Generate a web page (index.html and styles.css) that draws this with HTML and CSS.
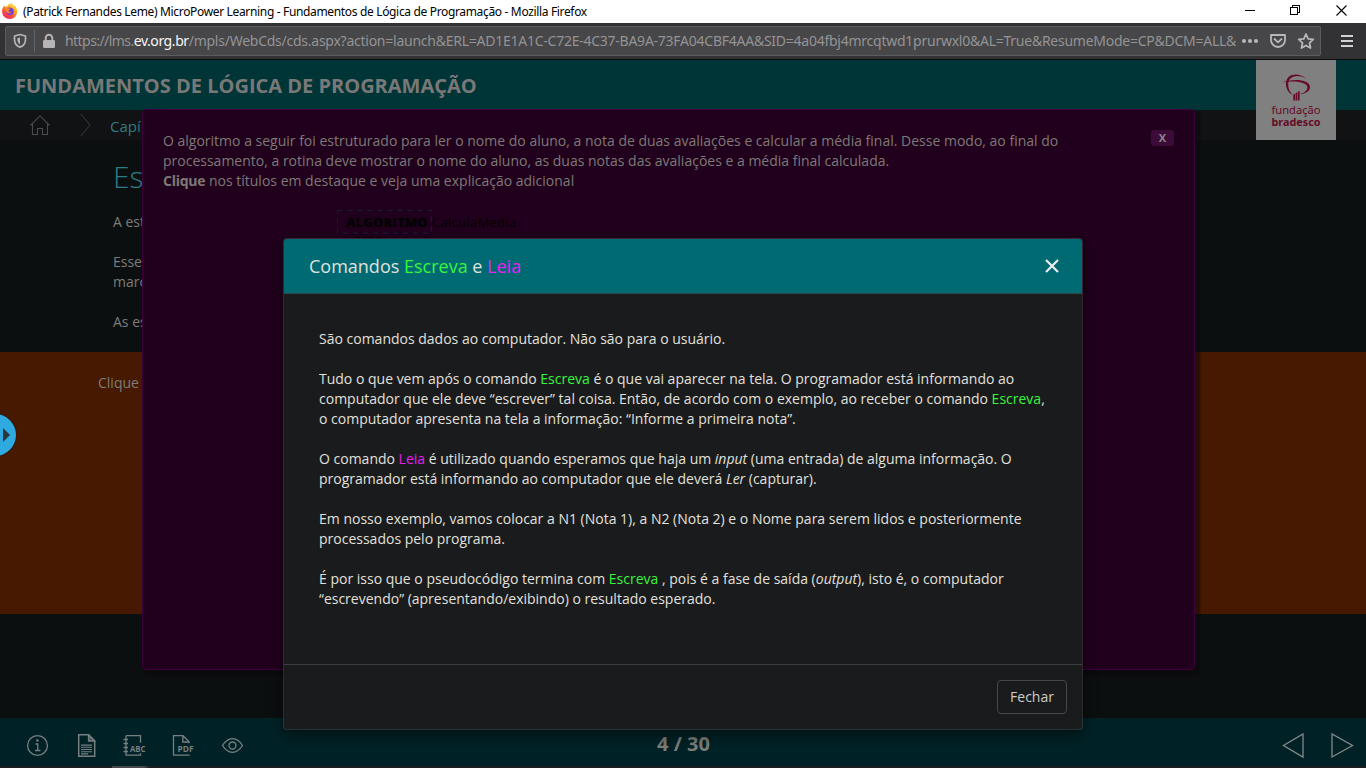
FILE: index.html
```html
<!DOCTYPE html>
<html lang="pt-BR">
<head>
<meta charset="utf-8">
<title>Fundamentos de Lógica de Programação</title>
<link rel="stylesheet" href="styles.css">
</head>
<body>
<div class="window">
  <header class="titlebar">
    <svg class="firefox" width="18" height="18" viewBox="0 0 18 18">
      <defs>
        <linearGradient id="fox" x1="0.85" y1="0" x2="0.2" y2="1"><stop offset="0" stop-color="#fff04a"/><stop offset="0.4" stop-color="#ffa51f"/><stop offset="0.7" stop-color="#ff4a3c"/><stop offset="1" stop-color="#e8206c"/></linearGradient>
      </defs>
      <path d="M1.2 7.2 3 3.4l1.4 1.5L6.5 4l2-3 .6 2L10 .8c1.3.8 2 1.900 2.300 3l1-.6c1.900 1.600 3 3.800 3 6a7.600 7.600 0 0 1-15.200.5z" fill="url(#fox)"/>
      <path d="M5 8.600c0-2 1.600-3.200 3.600-3.200 2.600 0 4.300 1.600 4.300 4s-1.700 3.900-4 3.900S5 11.400 5 8.600z" fill="#7b3fd6"/>
      <path d="M3.600 5.700c1.500-.5 3 0 3.700.9h2.200c0 .9-1.500 1.400-2 2 0 1.300 1.500 1.900 3 1.300-.8 1.700-4 1.900-5.200-.3-.7-1.200-1-2.500-1.700-3.900z" fill="#ff8a1e"/>
    </svg>
    <span class="title">(Patrick Fernandes Leme) MicroPower Learning - Fundamentos de Lógica de Programação - Mozilla Firefox</span>
    <svg class="winctl" width="110" height="20" viewBox="0 0 110 20" fill="none" stroke="#000" shape-rendering="crispEdges">
      <path d="M3 10.500h10"/>
      <path d="M48.500 7.500h7v7h-7zM50.500 7V5.500h7v7H56"/>
      <path d="M94.500 5.500l10 10M104.500 5.500l-10 10" shape-rendering="auto" stroke-width="1.100"/>
    </svg>
  </header>
  <div class="toolbar">
    <div class="urlbar">
      <svg class="shield" width="14" height="16" viewBox="0 0 14 16" fill="none" stroke="#b5b5b7" stroke-width="1.700"><path d="M1.500 3 7 1.500 12.500 3v3.500c0 3.800-2 6.500-5.500 7.600-3.500-1.100-5.500-3.800-5.500-7.600z" stroke-linejoin="round"/><path d="M7 4.500v7C5 10.300 4.300 8.500 4.300 5.200z" fill="#b5b5b7" stroke="none"/></svg>
      <span class="sep"></span>
      <svg class="lock" width="14" height="16" viewBox="0 0 14 16"><path d="M3.700 8V5a3.300 3.300 0 0 1 6.600 0v3" fill="none" stroke="#b5b5b7" stroke-width="1.900"/><rect x="1" y="7" width="12" height="8" rx="1.300" fill="#b5b5b7"/></svg>
      <span class="url"><span class="scheme">https://lms.</span><b>ev.org.br</b>/mpls/WebCds/cds.aspx?action=launch&amp;ERL=AD1E1A1C-C72E-4C37-BA9A-73FA04CBF4AA&amp;SID=4a04fbj4mrcqtwd1prurwxl0&amp;AL=True&amp;ResumeMode=CP&amp;DCM=ALL&amp;</span>
      <svg class="urlicons" width="78" height="20" viewBox="0 0 78 20" fill="none" stroke="#b8b8ba" stroke-width="1.800">
        <g fill="#b8b8ba" stroke="none"><circle cx="4" cy="10" r="2"/><circle cx="10" cy="10" r="2"/><circle cx="16" cy="10" r="2"/></g>
        <path d="M31 4h14v5a7 7 0 0 1-14 0z" stroke-linejoin="round"/><path d="M34.500 8 38 11.300 41.500 8" stroke-linecap="round"/>
        <path d="M66 3l2.200 4.800 5.100.6-3.800 3.500 1 5.100L66 14.500 61.500 17l1-5.100-3.800-3.500 5.100-.6z" stroke-linejoin="round"/>
      </svg>
    </div>
    <div class="menu"><i></i><i></i><i></i></div>
  </div>
  <main class="page">
    <div class="course">FUNDAMENTOS DE LÓGICA DE PROGRAMAÇÃO</div>
    <nav class="crumbs">
      <svg width="20" height="22" viewBox="0 0 20 22" fill="none" stroke="#4b4d4d" stroke-width="1.100"><path d="M.5 11.500 10 1.700l9.500 9.800M2.500 10v10.500h5v-6h5v6h5V10"/></svg>
      <svg class="chev" width="12" height="24" viewBox="0 0 12 24" fill="none" stroke="#3b3d3d"><path d="M.8 1 10 12 .8 23"/></svg>
      <span>Capí</span>
    </nav>
    <section class="lesson">
      <h1>Es</h1>
      <p>A est</p>
      <p>Esse<br>marc</p>
      <p>As es</p>
    </section>
    <section class="band">Clique</section>
    <section class="rest"></section>
    <footer class="bottombar">
      <svg width="226" height="28" viewBox="0 0 226 28" fill="none" stroke="#777f80" stroke-width="1.300">
        <circle cx="14.500" cy="13.500" r="9.900"/><path d="M12.500 12h2.300v6.500M12 18.500h5.500" /><circle cx="14.400" cy="8.500" r="1.300" fill="#777f80" stroke="none"/>
        <path d="M55.700 2.700h10l6 6v15.500h-16z" stroke-width="1.500"/><path d="M65.500 3v6h6z" fill="#4f595b"/><path d="M58 13.100h11M58 15.300h11M58 17.500h11M58 19.700h11M58 21.900h7" stroke-width="1.100"/>
        <path d="M103 3.700h14.500v7M103 3.700v19.500h14.500v-2M100.500 7.500h4.500M100.500 11.500h4.500M100.500 15.500h4.500M100.500 19.500h4.500"/>
        <path d="M166 22.500v.7h-15.500V3.700h9.500l6 6v1.500M159.800 4v6h6"/>
        <path d="M199.500 13.500c3-4.700 6.300-6.800 10-6.800s7 2.100 10 6.800c-3 4.700-6.300 6.800-10 6.800s-7-2.100-10-6.800z"/><circle cx="209.500" cy="13.500" r="3.500"/>
        <text x="107" y="19.600" class="tiny" textLength="15.500" lengthAdjust="spacingAndGlyphs">ABC</text>
        <text x="154.500" y="19.600" class="tiny" textLength="16" lengthAdjust="spacingAndGlyphs">PDF</text>
      </svg>
      <span class="count">4 / 30</span>
      <svg width="72" height="26" viewBox="0 0 72 26" fill="none" stroke="#85898a" stroke-width="1.300"><path d="M21 1v23L1.500 12.500zM50 1v23L70.500 12.500z"/></svg>
    </footer>
    <div class="scroll"><i></i></div>
  </main>

  <div class="logo">
    <svg width="80" height="80" viewBox="0 0 80 80" fill="#650b26">
      <path d="M49.500 18C43 12.500 29.500 13 30 24.500c.2 5.500 3.500 9 6.700 10.500-2.600-2.700-4.500-6-4.500-10.500C32.200 15.500 42 14 49.500 18z"/>
      <path d="M26 22.500c8-3.500 28-4.500 28 4.800 0 4-4.500 6.400-10 7 4.500-1.800 7.400-3.700 7.400-6.800 0-6.200-16-7-25.400-5z"/>
      <path d="M37.300 34.700 39 33.800V40.500h-1.700zM39.600 33.200l1.700-.9V40.500h-1.700zM41.900 31.800l1.700-1V40.500h-1.700z"/>
      <text x="15.500" y="54.300" class="l1" textLength="49" lengthAdjust="spacingAndGlyphs">fundação</text>
      <text x="15.500" y="65.700" class="l2" textLength="49" lengthAdjust="spacingAndGlyphs">bradesco</text>
    </svg>
  </div>

  <section class="panel">
    <button class="px">X</button>
    <p>O algoritmo a seguir foi estruturado para ler o nome do aluno, a nota de duas avaliações e calcular a média final. Desse modo, ao final do<br>processamento, a rotina deve mostrar o nome do aluno, as duas notas das avaliações e a média final calculada.<br><b>Clique</b> nos títulos em destaque e veja uma explicação adicional</p>
    <div class="algo">
      <svg class="dash" width="96" height="24" viewBox="0 0 96 24" fill="none" stroke="#10223c" stroke-dasharray="5 5"><rect x=".5" y=".5" width="94" height="22.500"/></svg>
      <b>ALGORITMO</b><span>CalculaMedia</span>
    </div>
    <div class="var">VAR</div>
  </section>

  <div class="drawer"><i></i></div>

  <section class="modal">
    <header><h2>Comandos <em class="g">Escreva</em> e <em class="m">Leia</em></h2>
      <svg width="14" height="14" viewBox="0 0 14 14" stroke="#ededed" stroke-width="2.200"><path d="M1 1l12 12M13 1 1 13"/></svg>
    </header>
    <div class="mbody">
      <p>São comandos dados ao computador. Não são para o usuário.</p>
      <p>Tudo o que vem após o comando <em class="g">Escreva</em> é o que vai aparecer na tela. O programador está informando ao<br>computador que ele deve “escrever” tal coisa. Então, de acordo com o exemplo, ao receber o comando <em class="g">Escreva</em>,<br>o computador apresenta na tela a informação: “Informe a primeira nota”.</p>
      <p>O comando <em class="m">Leia</em> é utilizado quando esperamos que haja um <i>input</i> (uma entrada) de alguma informação. O<br>programador está informando ao computador que ele deverá <i>Ler</i> (capturar).</p>
      <p>Em nosso exemplo, vamos colocar a N1 (Nota 1), a N2 (Nota 2) e o Nome para serem lidos e posteriormente<br>processados pelo programa.</p>
      <p>É por isso que o pseudocódigo termina com <em class="g">Escreva</em> , pois é a fase de saída (<i>output</i>), isto é, o computador<br>“escrevendo” (apresentando/exibindo) o resultado esperado.</p>
    </div>
    <footer><button>Fechar</button></footer>
  </section>
</div>
</body>
</html>
```
FILE: styles.css
```css
* { box-sizing: border-box; margin: 0; padding: 0; }
body { font: 14px/20px "Open Sans", sans-serif; background: #0c0f0f; overflow: hidden; }
em { font-style: normal; }
svg { display: block; flex: none; }
.window { position: relative; width: 1366px; height: 768px; overflow: hidden; display: flex; flex-direction: column; }

.titlebar { height: 23px; background: #fff; display: flex; align-items: flex-start; padding: 0 14px 0 1px; }
.firefox { margin-top: 2px; }
.title { font: 12px/24px "Noto Sans", sans-serif; color: #000; margin-left: 4px; flex: 1; white-space: nowrap; letter-spacing: -0.34px; }
.toolbar { height: 37px; background: #323234; border-bottom: 1px solid #0c0c0d; display: flex; align-items: center; gap: 20px; padding: 0 12px 0 5px; }
.urlbar { width: 1316px; height: 30px; background: #474749; border: 1px solid #5c5c5e; border-radius: 2px; display: flex; align-items: center; padding: 0 2px 0 7px; }
.sep { width: 1px; height: 22px; background: #5f656d; margin: 0 7px 0 7px; }
.url { font: 14px/30px "Noto Sans", sans-serif; color: #939395; margin-left: 9px; width: 1175px; overflow: hidden; white-space: nowrap; letter-spacing: -0.25px; }
.scheme { letter-spacing: -0.56px; }
.url b { font-weight: 400; color: #f6f6f6; letter-spacing: -0.42px; }
.urlicons { margin-left: 4px; }
.menu { display: flex; flex-direction: column; gap: 3px; }
.menu i { width: 12px; height: 2px; background: #d0d0d2; }

.page { flex: 1; display: flex; flex-direction: column; color: #7c7c7a; }
.course { height: 50px; background: #003538; font-size: 20px; font-weight: 700; line-height: 51px; padding-left: 15px; color: #797877; }
.crumbs { height: 30px; background: #111213; display: flex; align-items: center; padding-left: 30px; color: #327b80; }
.crumbs .chev { margin: 0 18px 0 30px; }
.crumbs span { padding-top: 1px; font-size: 15px; }
.lesson { height: 212px; padding: 20px 0 0 113px; }
.lesson h1 { font-size: 30px; font-weight: 300; line-height: 34px; color: #2b7c85; margin-bottom: 18px; }
.lesson p { margin-bottom: 20px; }
.band { height: 262px; background: #461900; padding: 21px 0 0 98px; }
.rest { height: 104px; }
.bottombar { height: 48px; background: #002226; display: flex; align-items: center; padding: 7px 12px 0 23px; }
.count { font-size: 20px; font-weight: 700; margin-left: 408px; margin-right: auto; padding-bottom: 4px; }
.tiny { font: 700 8.500px "Open Sans", sans-serif; fill: #777f80; stroke: none; }
.scroll { height: 2px; background: #1d1e21; padding-left: 112px; }
.scroll i { display: block; width: 36px; height: 2px; background: #46484a; border-right: 3px solid #333538; }

.logo { position: absolute; left: 1256px; top: 60px; width: 80px; height: 80px; background: #808080; }
.l1, .l2 { font: 11px "Noto Sans", sans-serif; fill: #650b26; }
.l2 { font-weight: 700; }

.panel { position: absolute; left: 142px; top: 109px; width: 1053px; height: 561px; background: #21001d; border: 1px solid #40003b; border-radius: 4px; box-shadow: 3px 3px 2px 2px rgba(8,8,10,.5); padding: 21px 20px; color: #7d7a75; }
.panel p b { letter-spacing: -0.25px; }
.px { float: right; margin-top: -1px; width: 23px; height: 16px; border: 0; border-radius: 3px; background: #3b0c38; color: #8e858d; font: 700 11px/16px "Open Sans", sans-serif; }
.algo { position: relative; display: flex; align-items: center; height: 24px; margin: 19px 0 0 174px; color: #020002; font-size: 13px; letter-spacing: .3px; }
.dash { position: absolute; left: 0; top: 0; }
.algo b { width: 95px; padding-left: 9px; font-weight: 800; letter-spacing: .1px; }
.algo span { line-height: 24px; }
.var { padding-left: 194px; font-weight: 800; font-size: 13px; line-height: 16px; margin-top: -1px; color: #0b000a; }

.drawer { position: absolute; left: -26px; top: 414px; width: 42px; height: 42px; border-radius: 50%; background: #2eaae0; box-shadow: 0 0 2px rgba(0,0,0,.5); }
.drawer i { position: absolute; left: 29px; top: 14px; border-left: 7px solid #2b373d; border-top: 7px solid transparent; border-bottom: 7px solid transparent; }

.modal { position: absolute; left: 283px; top: 238px; width: 800px; height: 492px; background: #1a1b1d; background-clip: padding-box; border: 1px solid rgba(110,110,110,.35); border-radius: 4px; box-shadow: 0 5px 15px rgba(0,0,0,.5); display: flex; flex-direction: column; color: #e2e0dc; }
.modal header { height: 55px; background: #006a72; border-bottom: 1px solid #2f4a4e; border-radius: 3px 3px 0 0; display: flex; justify-content: space-between; align-items: center; padding: 0 23px 0 25px; }
.modal h2 { font-size: 18px; font-weight: 400; }
.g { color: #38f53c; }
.m { color: #e91ff0; }
.mbody { flex: 1; padding: 35px 35px 0; white-space: nowrap; }
.mbody p { margin-bottom: 20px; }
.modal footer { height: 65px; border-top: 1px solid #3b3e40; display: flex; justify-content: flex-end; padding: 15px 15px 0; }
.modal button { width: 70px; height: 34px; background: transparent; border: 1px solid #45484a; border-radius: 4px; color: #cfcbc4; font: 14px/20px "Open Sans", sans-serif; }
```
